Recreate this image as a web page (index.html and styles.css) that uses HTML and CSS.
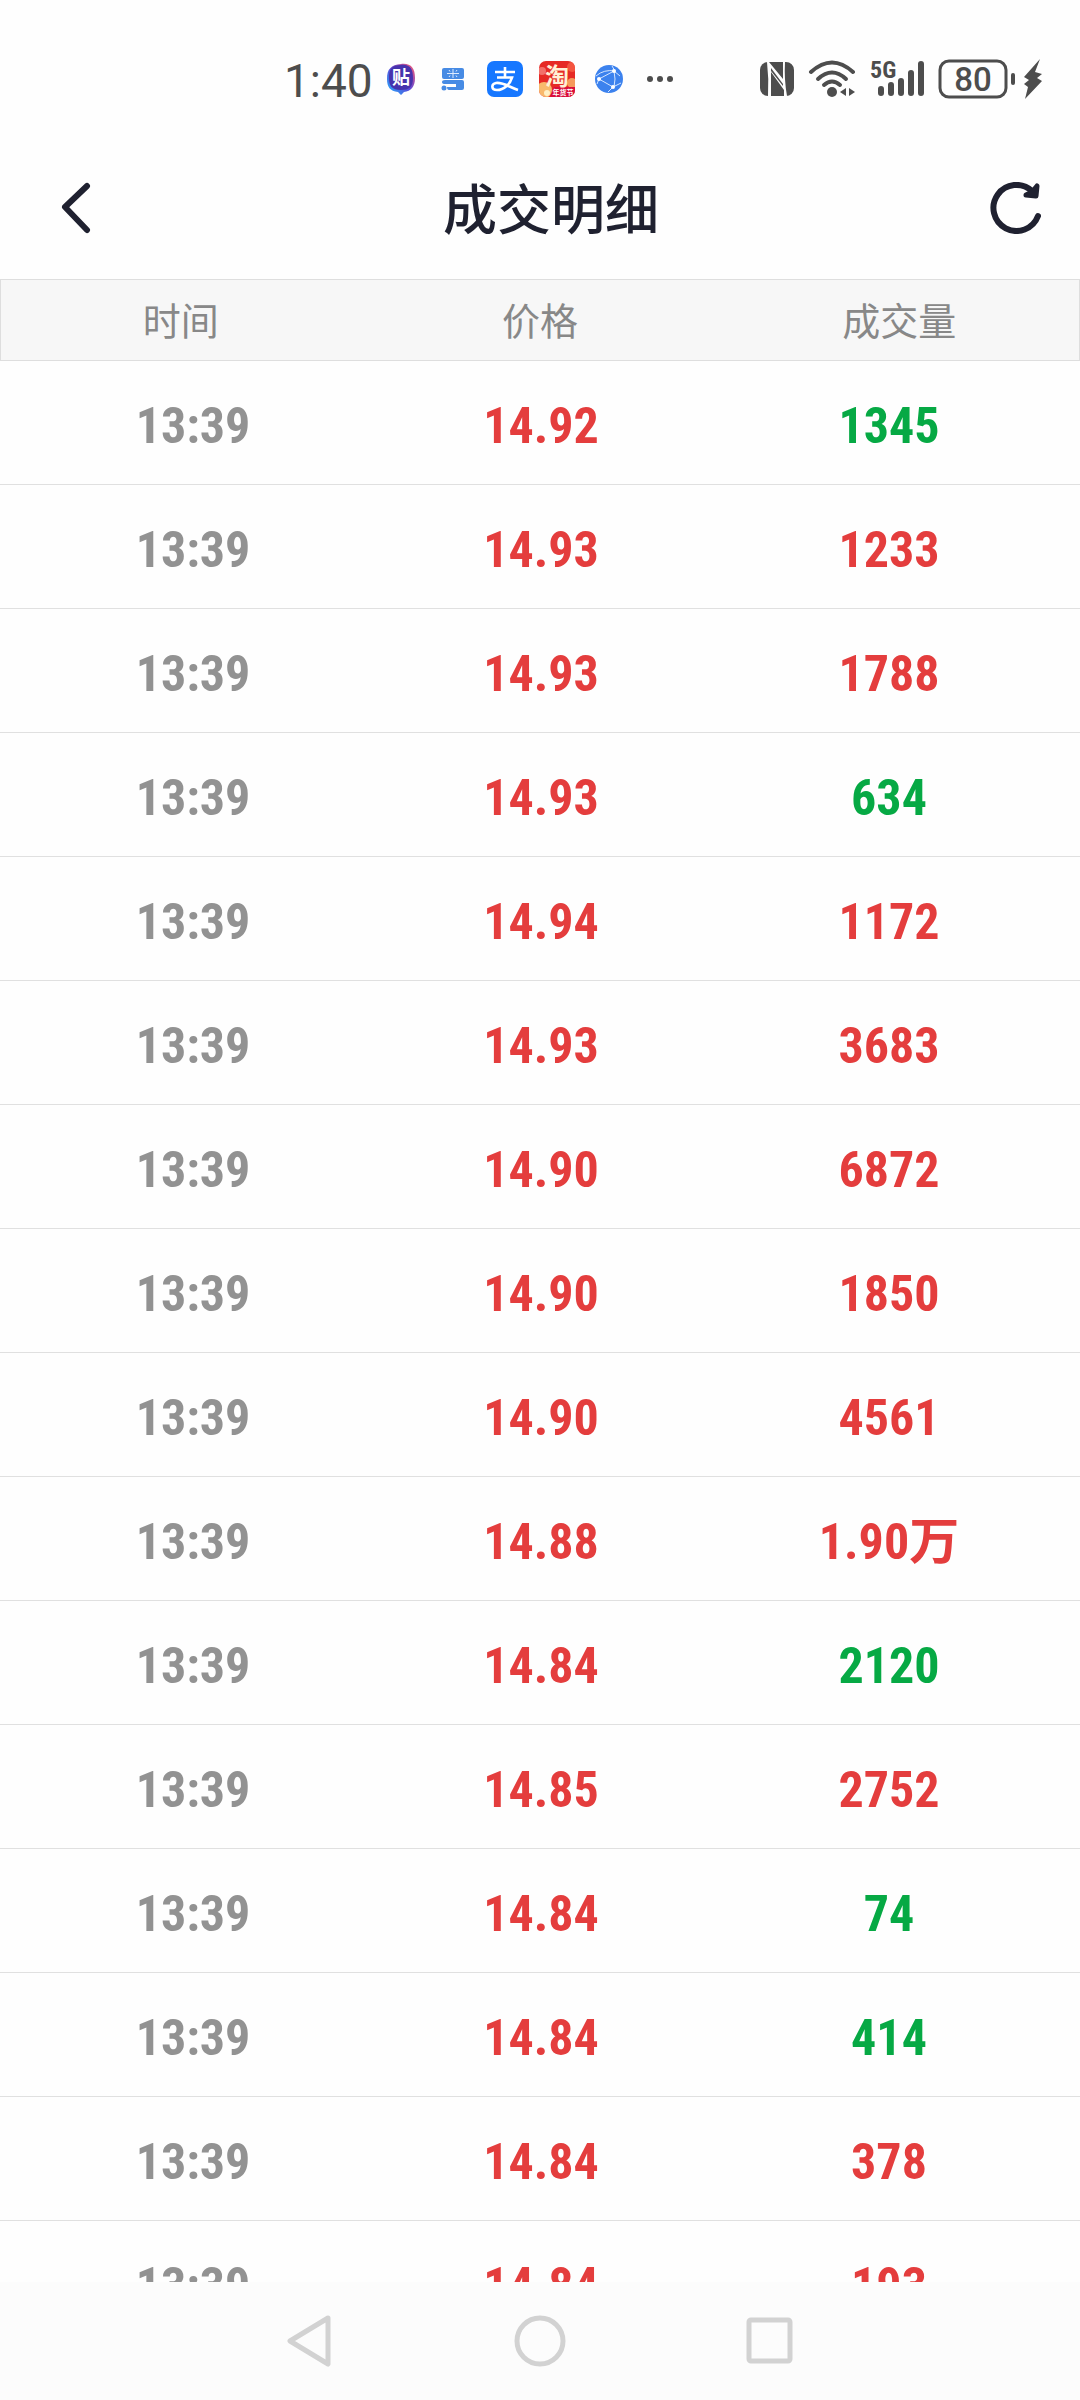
FILE: index.html
```html
<!DOCTYPE html>
<html lang="zh-CN">
<head>
<meta charset="utf-8">
<meta name="viewport" content="width=device-width, initial-scale=1">
<title>成交明细</title>
<link rel="stylesheet" href="styles.css">
</head>
<body>
<div class="screen">
  <div class="status">
    <div class="status-left">
      <span class="clock">1:40</span>
      <svg class="app" width="36" height="40" viewBox="0 0 36 40">
        <defs>
          <linearGradient id="tieba" x1="0" y1="1" x2="1" y2="0"><stop offset="0" stop-color="#22b8ff"/><stop offset=".5" stop-color="#5a48d8"/><stop offset="1" stop-color="#ff5a6e"/></linearGradient>
        </defs>
        <path d="M18 5C28 4 32 9 32 19C32 28 28 32 21 33L18 36L15 33C7 32 4 28 4 20C4 10 8 6 18 5Z" fill="url(#tieba)"/>
        <path d="M18 6C27 5 30 10 30 19C30 28 26 31 18 31C9 31 6 27 6 19C6 10 9 6 18 6Z" fill="#4733ad"/>
        <text class="glyph" x="18" y="25" font-size="18" text-anchor="middle">贴</text>
      </svg>
      <svg class="app" width="36" height="40" viewBox="0 0 36 40">
        <g fill="#478be4">
          <rect x="7" y="9" width="22" height="11" rx="2"/>
          <path d="M10 21H27Q29 21 29 23V29Q29 31 27 31H14Q12 31 12 28H21V25H10Q7 25 7 23Q7 21 10 21Z"/>
          <circle cx="9" cy="29" r="2.500"/>
        </g>
        <path d="M12 14.500H24M18 10V19M14 11L15 12.500M22 11L21 12.500M14 18L15 16.500M22 18L21 16.500" stroke="#dceaff" stroke-width="1"/>
      </svg>
      <svg class="app" width="36" height="40" viewBox="0 0 36 40">
        <rect y="2" width="36" height="36" rx="7" fill="#1677ff"/>
        <path d="M8 13H28M18 8V18M10 18.500H25C23 25 17 31 10 31C4 31 4 25 9 24C16 23 22 28 31 31" fill="none" stroke="#fff" stroke-width="2.600"/>
      </svg>
      <svg class="app" width="36" height="40" viewBox="0 0 36 40">
        <defs><clipPath id="tb"><rect y="2" width="36" height="36" rx="7"/></clipPath></defs>
        <g clip-path="url(#tb)">
          <rect y="2" width="36" height="36" fill="#e62a25"/>
          <circle cx="3" cy="12" r="4" fill="#f2706a"/>
          <circle cx="33" cy="8" r="5" fill="#f4543f"/>
          <circle cx="33" cy="24" r="5" fill="#f59a5c"/>
          <circle cx="5" cy="31" r="8" fill="#f8b96c"/>
          <circle cx="8" cy="34" r="3" fill="#fff0c4"/>
          <path d="M15 28H36V38H11Z" fill="#d90f3c"/>
        </g>
        <text class="glyph cream" x="18" y="26" font-size="24" text-anchor="middle">淘</text>
        <text class="glyph" x="24" y="36" font-size="7" text-anchor="middle">年货节</text>
      </svg>
      <svg class="app" width="36" height="40" viewBox="0 0 36 40">
        <circle cx="18" cy="20" r="14" fill="#3c82ee"/>
        <path d="M5 17Q13 10 24 12M23 12Q25 20 23 28M8 20L22 28M8 20L23 12M23 12L29 17M22 28L30 24M22 28L17 33M8 20L6 25M24 12L21 7" fill="none" stroke="#d5e6ff" stroke-width="1"/>
        <circle cx="23" cy="12" r="2" fill="#fff"/><circle cx="8" cy="20" r="2" fill="#fff"/><circle cx="22" cy="28" r="2" fill="#fff"/>
      </svg>
      <svg class="app" width="36" height="40" viewBox="0 0 36 40" fill="#4d4d4d">
        <circle cx="7" cy="20" r="3"/><circle cx="17" cy="20" r="3"/><circle cx="27" cy="20" r="3"/>
      </svg>
    </div>
    <div class="status-right">
      <svg width="34" height="40" viewBox="0 0 34 40">
        <rect y="3" width="34" height="34" rx="8" fill="#4d4d4d"/>
        <path d="M7 3Q9 20 8 37H11V13L24 31V37H27Q24 20 25 3H23V20L9 3Z" fill="#fefefe"/>
        <path d="M11 9L23 25V27L11 12Z" fill="#4d4d4d"/>
      </svg>
      <svg width="48" height="40" viewBox="0 0 48 40">
        <g fill="none" stroke="#4d4d4d" stroke-width="4" stroke-linecap="round">
          <path d="M3 13Q24 -6 45 13"/><path d="M10 20Q24 7 38 20"/><path d="M16 26Q24 19 32 26"/>
        </g>
        <circle cx="24" cy="33" r="5" fill="#4d4d4d"/>
        <path d="M38 29V37L32 33ZM41 29V37L47 33Z" fill="#4d4d4d"/>
      </svg>
      <svg width="54" height="40" viewBox="0 0 54 40">
        <text class="net" x="0" y="19" font-size="24">5G</text>
        <path d="M11 30V34M21 26V34M31 22V34M41 14V34M51 5V34" stroke="#4d4d4d" stroke-width="6" stroke-linecap="round"/>
      </svg>
      <svg width="78" height="40" viewBox="0 0 78 40">
        <rect x="2" y="2" width="66" height="36" rx="9" fill="none" stroke="#4d4d4d" stroke-width="3"/>
        <rect x="73" y="14" width="4" height="12" rx="2" fill="#4d4d4d"/>
        <text class="level" x="35" y="32" font-size="33" text-anchor="middle">80</text>
      </svg>
      <svg class="bolt" width="20" height="40" viewBox="0 0 20 40">
        <path d="M17 0L1 18L6 21L1 25L5 28L2 40L19 22L14 19L19 15L12 13Z" fill="#4d4d4d"/>
      </svg>
    </div>
  </div>

  <header class="titlebar">
    <button class="icon-btn" type="button" aria-label="返回">
      <svg width="52" height="52" viewBox="0 0 52 52"><path d="M38 4L16 25L38 48" fill="none" stroke="#1f2130" stroke-width="6" stroke-linecap="round" stroke-linejoin="round"/></svg>
    </button>
    <h1>成交明细</h1>
    <button class="icon-btn" type="button" aria-label="刷新">
      <svg width="52" height="52" viewBox="0 0 52 52"><path d="M42 9A23 23 0 1 0 48 34" fill="none" stroke="#1f2130" stroke-width="6" stroke-linecap="round"/><path d="M47 4L46 14L36 13L42 10Z" fill="#1f2130" stroke="#1f2130" stroke-width="5" stroke-linejoin="round"/></svg>
    </button>
  </header>

  <main class="list">
    <table>
      <thead><tr><th scope="col">时间</th><th scope="col">价格</th><th scope="col">成交量</th></tr></thead>
      <tbody>
        <tr><td>13:39</td><td class="up">14.92</td><td class="down">1345</td></tr>
        <tr><td>13:39</td><td class="up">14.93</td><td class="up">1233</td></tr>
        <tr><td>13:39</td><td class="up">14.93</td><td class="up">1788</td></tr>
        <tr><td>13:39</td><td class="up">14.93</td><td class="down">634</td></tr>
        <tr><td>13:39</td><td class="up">14.94</td><td class="up">1172</td></tr>
        <tr><td>13:39</td><td class="up">14.93</td><td class="up">3683</td></tr>
        <tr><td>13:39</td><td class="up">14.90</td><td class="up">6872</td></tr>
        <tr><td>13:39</td><td class="up">14.90</td><td class="up">1850</td></tr>
        <tr><td>13:39</td><td class="up">14.90</td><td class="up">4561</td></tr>
        <tr><td>13:39</td><td class="up">14.88</td><td class="up">1.90万</td></tr>
        <tr><td>13:39</td><td class="up">14.84</td><td class="down">2120</td></tr>
        <tr><td>13:39</td><td class="up">14.85</td><td class="up">2752</td></tr>
        <tr><td>13:39</td><td class="up">14.84</td><td class="down">74</td></tr>
        <tr><td>13:39</td><td class="up">14.84</td><td class="down">414</td></tr>
        <tr><td>13:39</td><td class="up">14.84</td><td class="up">378</td></tr>
        <tr><td>13:39</td><td class="up">14.84</td><td class="up">193</td></tr>
      </tbody>
    </table>
  </main>

  <nav class="sysnav" aria-label="系统导航">
    <button type="button" aria-label="返回上一级"><svg width="52" height="52" viewBox="0 0 52 52"><path d="M44 3L6 26L44 49Z"/></svg></button>
    <button type="button" aria-label="主屏幕"><svg width="52" height="52" viewBox="0 0 52 52"><circle cx="26" cy="26" r="23"/></svg></button>
    <button type="button" aria-label="最近任务"><svg width="52" height="52" viewBox="0 0 52 52"><rect x="5" y="5" width="41" height="41" rx="2"/></svg></button>
  </nav>
</div>
</body>
</html>
```
FILE: styles.css
```css
* { box-sizing: border-box; }

body {
  margin: 0;
  background: #fefefe;
  color: #1f2130;
  font-family: Roboto, "Noto Sans CJK SC", sans-serif;
}

.screen {
  display: flex;
  flex-direction: column;
  height: 100vh;
}

button {
  display: flex;
  padding: 0;
  border: 0;
  background: none;
}

svg { display: block; }

/* Status bar */
.status {
  display: flex;
  align-items: center;
  justify-content: space-between;
  flex: none;
  height: 158px;
  padding: 0 37px 0 284px;
}

.status-left,
.status-right {
  display: flex;
  align-items: center;
  gap: 16px;
}

.clock {
  margin-right: -6px;
  padding-top: 3px;
  color: #4d4d4d;
  font-size: 46px;
  line-height: 54px;
}

.status-right { gap: 14px; }

.bolt { margin-left: -7px; }

.glyph {
  fill: #fff;
  font-family: "Noto Sans CJK SC", sans-serif;
  font-weight: 700;
}

.cream { fill: #fff0d6; }

.net {
  fill: #4d4d4d;
  font-family: "Roboto Condensed", Roboto, sans-serif;
  font-weight: 700;
}

.level {
  fill: #4d4d4d;
  font-weight: 500;
}

/* Title bar */
.titlebar {
  display: flex;
  align-items: center;
  justify-content: space-between;
  flex: none;
  height: 121px;
  padding: 0 38px 21px 49px;
}

h1 {
  margin: 0;
  padding: 8px 0 0 11px;
  font-size: 54px;
  font-weight: 500;
  line-height: 72px;
}

/* Trade list */
.list {
  flex: 1;
  min-height: 0;
  overflow: hidden;
}

table, thead, tbody { display: block; }

tr {
  display: grid;
  grid-template-columns: repeat(3, 1fr);
  text-align: center;
}

th, td { padding: 0; }

thead tr {
  padding-top: 4px;
  border: 1px solid #dedede;
  background: #f7f7f7;
}

th {
  color: #888;
  font-size: 38px;
  font-weight: 400;
  line-height: 76px;
}

tbody tr {
  padding: 7px 17px 0 19px;
  border-bottom: 1px solid #e0e0e0;
}

td {
  height: 116px;
  color: #929292;
  font-family: "Roboto Condensed", Roboto, "Noto Sans CJK SC", sans-serif;
  font-size: 50px;
  font-weight: 700;
  line-height: 116px;
}

.up { color: #e43d3d; }
.down { color: #06a944; }

/* System navigation */
.sysnav {
  display: flex;
  align-items: center;
  justify-content: center;
  gap: 178px;
  flex: none;
  height: 118px;
  background: #fcfcfc;
}

.sysnav svg {
  fill: none;
  stroke: #d2d2d2;
  stroke-width: 5;
  stroke-linejoin: round;
}
```
